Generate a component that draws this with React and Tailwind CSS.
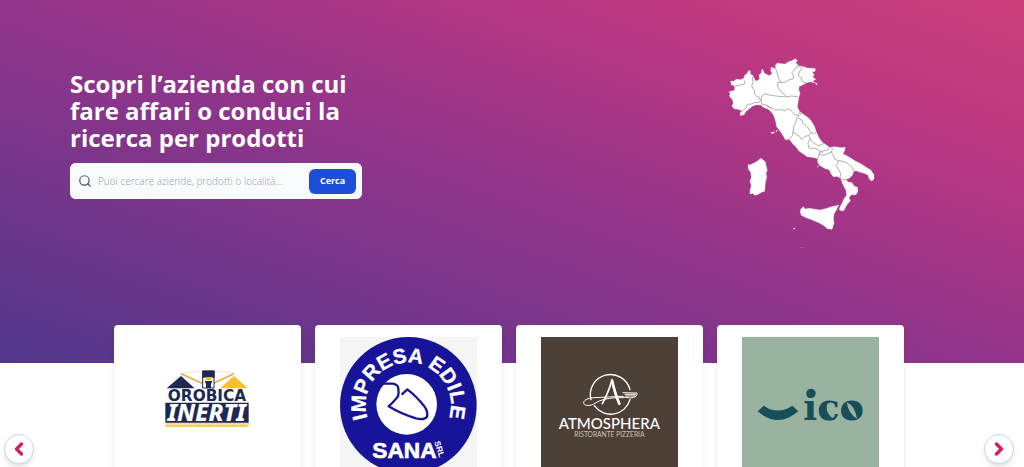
import { ChevronLeft, ChevronRight, Search } from "lucide-react";

function ItalyMap() {
  return (
    <svg viewBox="0 0 495 600" className="w-[165px] shrink-0" role="img" aria-label="Mappa dell'Italia">
      <g fill="#fff" stroke="#fff" strokeWidth="1" strokeLinejoin="round">
        <path d="M32 93L40 94L50 88L62 89L72 84L74 76L80 72L84 65L88 60L92 66L90 72L98 76L102 84L106 92L113 92L119 86L117 76L124 68L126 57L130 62L133 70L142 74L148 77L157 70L152 62L154 52L162 54L168 58L166 46L172 39L184 41L196 42L204 36L216 32L226 26L232 32L227 38L236 47L250 50L262 54L286 56L285 64L276 66L283 74L278 80L287 88L278 94L284 98L270 95L258 99L246 106L238 109L236 118L240 130L236 144L234 158L232 170L238 184L252 194L266 204L276 216L284 230L288 244L296 262L306 276L318 284L328 292L346 290L362 293L376 292L374 302L368 312L378 316L392 324L404 332L420 340L436 350L452 360L462 374L462 386L456 394L448 387L443 374L432 370L418 366L408 362L401 364L398 374L390 383L378 389L384 396L396 398L402 408L412 412L414 424L408 434L394 434L387 442L391 453L382 462L375 475L370 483L358 480L360 470L367 458L372 446L380 436L378 420L372 410L366 396L362 385L350 379L341 381L333 371L328 359L316 356L306 350L298 346L292 334L294 326L286 324L276 322L262 320L250 312L238 304L228 291L218 281L208 268L196 269L190 258L182 246L176 238L170 230L168 218L164 204L160 194L152 184L144 177L132 173L122 165L110 164L98 168L88 176L78 184L72 194L62 197L60 188L66 182L54 178L42 176L36 168L40 160L38 150L28 138L31 130L26 126L44 121L44 108L34 104Z" />
        <path d="M84 344L92 344L104 338L114 332L122 325L130 330L136 336L140 354L142 362L138 368L140 382L136 398L134 424L126 426L112 434L104 436L98 430L90 432L90 420L94 408L90 394L94 382L92 366L85 358Z" />
        <path d="M242 478L250 470L256 477L270 475L280 477L300 480L316 476L334 470L348 467L356 465L349 480L342 492L340 506L342 520L336 538L322 536L312 527L300 520L286 514L272 508L258 503L244 496L241 487Z" />
        <path d="M286 98l4 1l1 6l-3 -2ZM152 248l8 -2l4 -1l-5 6ZM221 534h3v3h-3ZM168 241l4 1l-2 3ZM292 348l3 2l-2 2Z" />
      </g>
      <g fill="none" stroke="#888" strokeWidth="2" strokeLinejoin="round">
        <path d="M44 108L56 107L64 103L72 104L75 98L72 91" />
        <path d="M98 80L97 90L100 98L95 106L99 116L104 122L103 132L110 138L118 142L121 152" />
        <path d="M60 190L70 180L78 174L82 163L94 162L104 157L116 158L122 151L126 156L124 162L138 165L152 175" />
        <path d="M123 152L126 138L133 131L144 134L160 137L178 139L196 141L214 138L234 140" />
        <path d="M168 58L172 72L176 86L184 98L174 96L172 108L180 122L192 132L200 140" />
        <path d="M184 98L196 96L206 90L220 86L220 76L216 68L224 60L228 52L238 47" />
        <path d="M238 49L246 55L238 66L235 78L244 84L246 94L258 99" />
        <path d="M138 165L150 172L166 180L182 179L194 182L204 176L216 184L224 194L236 196L238 186" />
        <path d="M237 196L230 204L228 216L222 226L220 240L218 256L208 268" />
        <path d="M234 204L246 210L250 222L262 230L268 240L274 250L266 256L254 260L244 268L238 258L226 252L219 244" />
        <path d="M274 250L288 248M266 256L270 266L264 280L266 292L274 296L284 294L292 298L300 304L308 308" />
        <path d="M270 266L280 278L292 286L300 286L312 280" />
        <path d="M328 292L324 300L312 302L300 306L296 318L294 326" />
        <path d="M296 312L308 316L320 312L334 306L340 316L344 328L356 332L352 342L348 346L356 360L362 370L360 384" />
        <path d="M334 306L338 296L330 291M356 332L368 334L380 338L390 346L398 354L401 364M364 385L370 390L380 388" />
      </g>
      <g fill="#8c6f90">
        <path d="M328 452h3v3h-3ZM331 457h2v3h-2ZM240 190h4v3h-4ZM240 592h12v2h-12Z" />
      </g>
    </svg>
  );
}

function OrobicaLogo() {
  return (
    <svg viewBox="0 0 411 411" className="w-full" role="img" aria-label="Orobica Inerti">
      <path d="M126 108L210 100L286 108" fill="none" stroke="#d8dade" strokeWidth="2" />
      <path d="M83 154L126 117L167 154Z" fill="#1d2951" />
      <path d="M243 154L285 117L327 154Z" fill="#f9bf2c" />
      <path d="M126 110L194 141M285 110L218 141" stroke="#e3b04a" strokeWidth="5" />
      <path d="M191 102H225V153H191Z" fill="#fff" stroke="#1d2951" strokeWidth="3" />
      <path d="M190 101H227V122H190ZM197 132H220L216 142V153H201V142Z" fill="#1d2951" />
      <path d="M198 120H220L216 130H202Z" fill="#f9bf2c" />
      <text x="204" y="191" textAnchor="middle" className="font-['DejaVu_Sans'] text-[46px] font-bold" fill="#1d2951">OROBICA</text>
      <path d="M79 197H329V257H79Z" fill="#1d2951" />
      <text x="203" y="252" textAnchor="middle" className="font-['Noto_Sans'] text-[71px] font-extrabold italic" fill="#fff">INERTI</text>
      <path d="M79 259H329V270H79Z" fill="#f8cc66" />
      <path d="M79 263H329" stroke="#fff0c4" strokeWidth="2" strokeDasharray="30 4" />
    </svg>
  );
}

function SanaLogo() {
  return (
    <svg viewBox="0 0 411 411" className="w-full bg-[#f5f5f5]" role="img" aria-label="Impresa Edile Sana SRL">
      <defs>
        <path id="sana-arc" d="M124 304A128 128 0 1 1 286 304" />
      </defs>
      <circle cx="205" cy="205" r="205" fill="#17149a" />
      <text className="font-['Liberation_Sans'] text-[62px] font-bold" fill="#fff" stroke="#fff" strokeWidth="1" textAnchor="middle">
        <textPath href="#sana-arc" startOffset="50%">IMPRESA EDILE</textPath>
      </text>
      <circle cx="200" cy="202" r="91" fill="#fff" />
      <path d="M128 140H158Q174 143 175 154Q177 168 174 178Q165 190 146 208Q185 232 228 244Q252 250 261 239Q265 224 253 208Q230 178 202 157L185 173" fill="none" stroke="#17149a" strokeWidth="7" strokeLinejoin="round" />
      <text x="97" y="363" className="font-['Liberation_Sans'] text-[68px] font-bold" fill="#fff" stroke="#fff" strokeWidth="2">SANA</text>
      <text transform="translate(283 315) rotate(73)" className="font-['Liberation_Sans'] text-[25px] font-bold" fill="#fff">SRL</text>
    </svg>
  );
}

function AtmospheraLogo() {
  return (
    <svg viewBox="0 0 411 411" className="w-full bg-[#4c4037]" role="img" aria-label="Atmosphera Ristorante Pizzeria">
      <g fill="none" stroke="#fff" strokeLinecap="round">
        <path d="M150 188A60 60 0 1 1 267 158M267 188A60 60 0 0 1 160 206" strokeWidth="4" />
        <path d="M184 200Q201 170 213 130" strokeWidth="5" />
        <path d="M213 130Q222 170 235 200" strokeWidth="8" />
        <path d="M246 178C218 180 188 180 158 182C138 184 127 190 128 199C131 208 150 207 162 199C178 188 205 181 247 182" strokeWidth="3" />
        <path d="M246 167L288 168Q291 181 268 183L246 180M252 172H284M254 177H283" strokeWidth="3" />
      </g>
      <text x="205" y="276" textAnchor="middle" className="font-['Lato'] text-[45px] font-medium" fill="#fff">ATMOSPHERA</text>
      <text x="205" y="301" textAnchor="middle" className="font-['Lato'] text-[20px]" fill="#c9c1ba">RISTORANTE PIZZERIA</text>
    </svg>
  );
}

function IcoLogo() {
  return (
    <svg viewBox="0 0 411 411" className="w-full bg-[#9ab3a1]" role="img" aria-label="ico">
      <path d="M47 223L65 206Q108 235 151 206L169 223Q108 275 47 223Z" fill="#164f59" />
      <text x="184" y="250" className="font-['DejaVu_Serif'] text-[110px] font-bold" fill="#164f59">ico</text>
      <circle cx="207" cy="169" r="14" fill="#164f59" />
      <ellipse cx="330" cy="221" rx="22" ry="26" fill="#164f59" />
      <path d="M314 196Q338 206 345 245Q320 232 314 196Z" fill="#9ab3a1" />
      <path d="M258 193Q244 222 274 247Q252 248 247 222Q247 203 258 193Z" fill="#164f59" />
    </svg>
  );
}

const companies = [
  { name: "Orobica Inerti", Logo: OrobicaLogo },
  { name: "Impresa Edile Sana", Logo: SanaLogo },
  { name: "Atmosphera", Logo: AtmospheraLogo },
  { name: "Ico", Logo: IcoLogo },
];

const arrowClass =
  "absolute top-1/2 -translate-y-1/2 flex h-[30px] w-[30px] items-center justify-center rounded-full border border-slate-300 bg-white text-[#d81b60] shadow-md";

export default function App() {
  return (
    <div className="h-screen overflow-hidden bg-white font-['Open_Sans','Noto_Sans',sans-serif]">
      <header className="flex h-[363px] items-start justify-between bg-[linear-gradient(to_top_right,#50378c,#93358a_50%,#b83782_76%,#cb407a)] pt-[50px] pr-[139px] pl-[70px]">
        <div className="w-[292px] pt-5">
          <h1 className="text-[24px] leading-[27px] font-bold text-white">
            Scopri l’azienda con cui fare affari o conduci la ricerca per prodotti
          </h1>
          <form
            onSubmit={(e) => e.preventDefault()}
            className="mt-3 flex h-9 items-center rounded-md bg-slate-50 pr-1.5 pl-2 ring-1 ring-white ring-inset"
          >
            <Search className="h-3.5 w-3.5 shrink-0 text-gray-600" />
            <input
              type="search"
              aria-label="Cerca"
              placeholder="Puoi cercare aziende, prodotti o località..."
              className="ml-1.5 min-w-0 flex-1 text-[10px] font-light placeholder-gray-400 outline-none"
            />
            <button type="submit" className="h-[25px] w-[47px] rounded-md bg-[#1d4ed8] text-[9px] font-bold text-white">
              Cerca
            </button>
          </form>
        </div>
        <ItalyMap />
      </header>

      <section className="relative -mt-[38px] h-[248px] pr-1.5">
        <ul className="flex justify-center gap-3.5">
          {companies.map(({ name, Logo }) => (
            <li key={name} className="flex h-[248px] w-[187px] flex-col rounded bg-white px-[25px] pt-3 shadow-md">
              <Logo />
            </li>
          ))}
        </ul>
        <button type="button" aria-label="Precedente" className={`${arrowClass} left-1`}>
          <ChevronLeft className="h-5 w-5" strokeWidth={4} />
        </button>
        <button type="button" aria-label="Successivo" className={`${arrowClass} right-2.5`}>
          <ChevronRight className="h-5 w-5" strokeWidth={4} />
        </button>
      </section>
    </div>
  );
}
